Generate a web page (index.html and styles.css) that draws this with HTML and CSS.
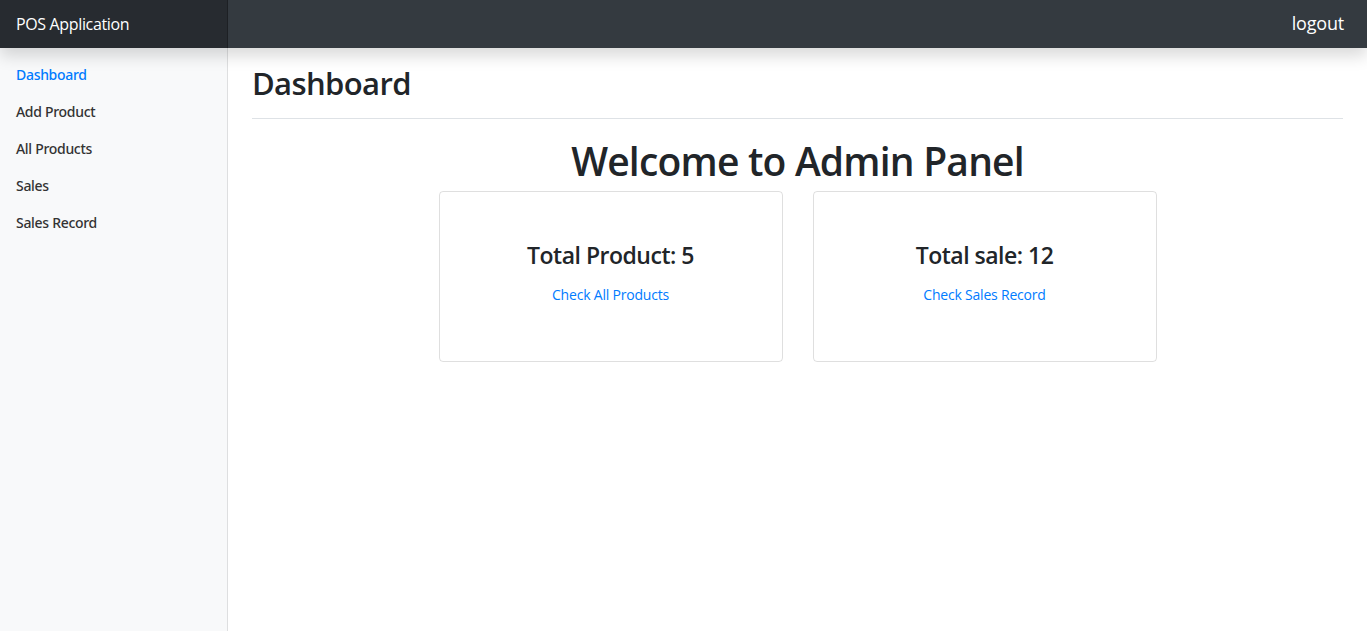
FILE: index.html
```html
<!DOCTYPE html>
<html lang="en">
<head>
<meta charset="utf-8">
<title>POS Application</title>
<link rel="stylesheet" href="styles.css">
</head>
<body>
<header class="navbar">
  <a class="brand" href="#">POS Application</a>
  <a class="logout" href="#">logout</a>
</header>
<div class="layout">
  <nav class="sidebar">
    <ul class="side-nav">
      <li><a class="side-link active" href="#">Dashboard</a></li>
      <li><a class="side-link" href="#">Add Product</a></li>
      <li><a class="side-link" href="#">All Products</a></li>
      <li><a class="side-link" href="#">Sales</a></li>
      <li><a class="side-link" href="#">Sales Record</a></li>
    </ul>
  </nav>
  <main class="main">
    <div class="page-head">
      <h1 class="page-title">Dashboard</h1>
    </div>
    <h1 class="welcome">Welcome to Admin Panel</h1>
    <div class="cards">
      <div class="card">
        <h4 class="card-title">Total Product: 5</h4>
        <a class="card-link" href="#">Check All Products</a>
      </div>
      <div class="card">
        <h4 class="card-title">Total sale: 12</h4>
        <a class="card-link" href="#">Check Sales Record</a>
      </div>
    </div>
  </main>
</div>
</body>
</html>
```

FILE: styles.css
```css
* { box-sizing: border-box; }
html, body { height: 100%; }
body {
  margin: 0;
  font-family: "Open Sans", "Noto Sans", "Liberation Sans", sans-serif;
  font-size: 16px;
  line-height: 1.5;
  color: #212529;
  background: #fff;
  overflow: hidden;
  display: flex;
  flex-direction: column;
}
a { text-decoration: none; }

.navbar {
  position: relative;
  z-index: 10;
  display: flex;
  align-items: center;
  justify-content: space-between;
  height: 48px;
  flex: none;
  background: #343a40;
  box-shadow: 0 8px 16px rgba(0,0,0,.15);
}
.brand {
  width: 228px;
  height: 48px;
  display: flex;
  align-items: center;
  padding: 0 16px;
  font-size: 16px;
  letter-spacing: -0.35px;
  color: #fff;
  background: rgba(0,0,0,.25);
  box-shadow: inset -1px 0 0 rgba(0,0,0,.25);
}
.logout {
  padding: 0 23px 2px 0;
  font-size: 18px;
  letter-spacing: -0.2px;
  color: #fff;
}

.layout {
  flex: 1;
  display: flex;
  min-height: 0;
}
.sidebar {
  width: 228px;
  flex: none;
  background: #f8f9fa;
  box-shadow: inset -1px 0 0 rgba(0,0,0,.1);
  padding-top: 8px;
}
.side-nav {
  list-style: none;
  margin: 0;
  padding: 0;
}
.side-link {
  display: block;
  padding: 8px 16px;
  font-family: "Noto Sans", "Open Sans", sans-serif;
  font-size: 14px;
  line-height: 21px;
  font-weight: 500;
  letter-spacing: -0.3px;
  color: #333;
}
.side-link.active { color: #007bff; }

.main {
  flex: 1;
  padding: 0 24px;
}
.page-head {
  padding: 16px 0 8px;
  margin-bottom: 16px;
  border-bottom: 1px solid #dee2e6;
}
.page-title {
  margin: 0 0 8px;
  font-size: 31px;
  font-weight: 600;
  letter-spacing: -0.6px;
  line-height: 1.24;
}
.welcome {
  margin: 0 0 8px;
  text-align: center;
  font-size: 39px;
  font-weight: 600;
  letter-spacing: -0.8px;
  line-height: 1.23;
  padding-top: 2px;
}
.cards {
  display: flex;
  justify-content: center;
  gap: 30px;
  margin-top: -2px;
}
.card {
  width: 344px;
  height: 171px;
  border: 1px solid rgba(0,0,0,.125);
  border-radius: 4px;
  display: flex;
  flex-direction: column;
  align-items: center;
  padding-top: 49px;
}
.card-title {
  margin: 0 0 14px;
  font-size: 23px;
  font-weight: 600;
  letter-spacing: -0.5px;
  line-height: 1.25;
}
.card-link {
  font-size: 14px;
  line-height: 21px;
  letter-spacing: -0.2px;
  color: #007bff;
}
```
